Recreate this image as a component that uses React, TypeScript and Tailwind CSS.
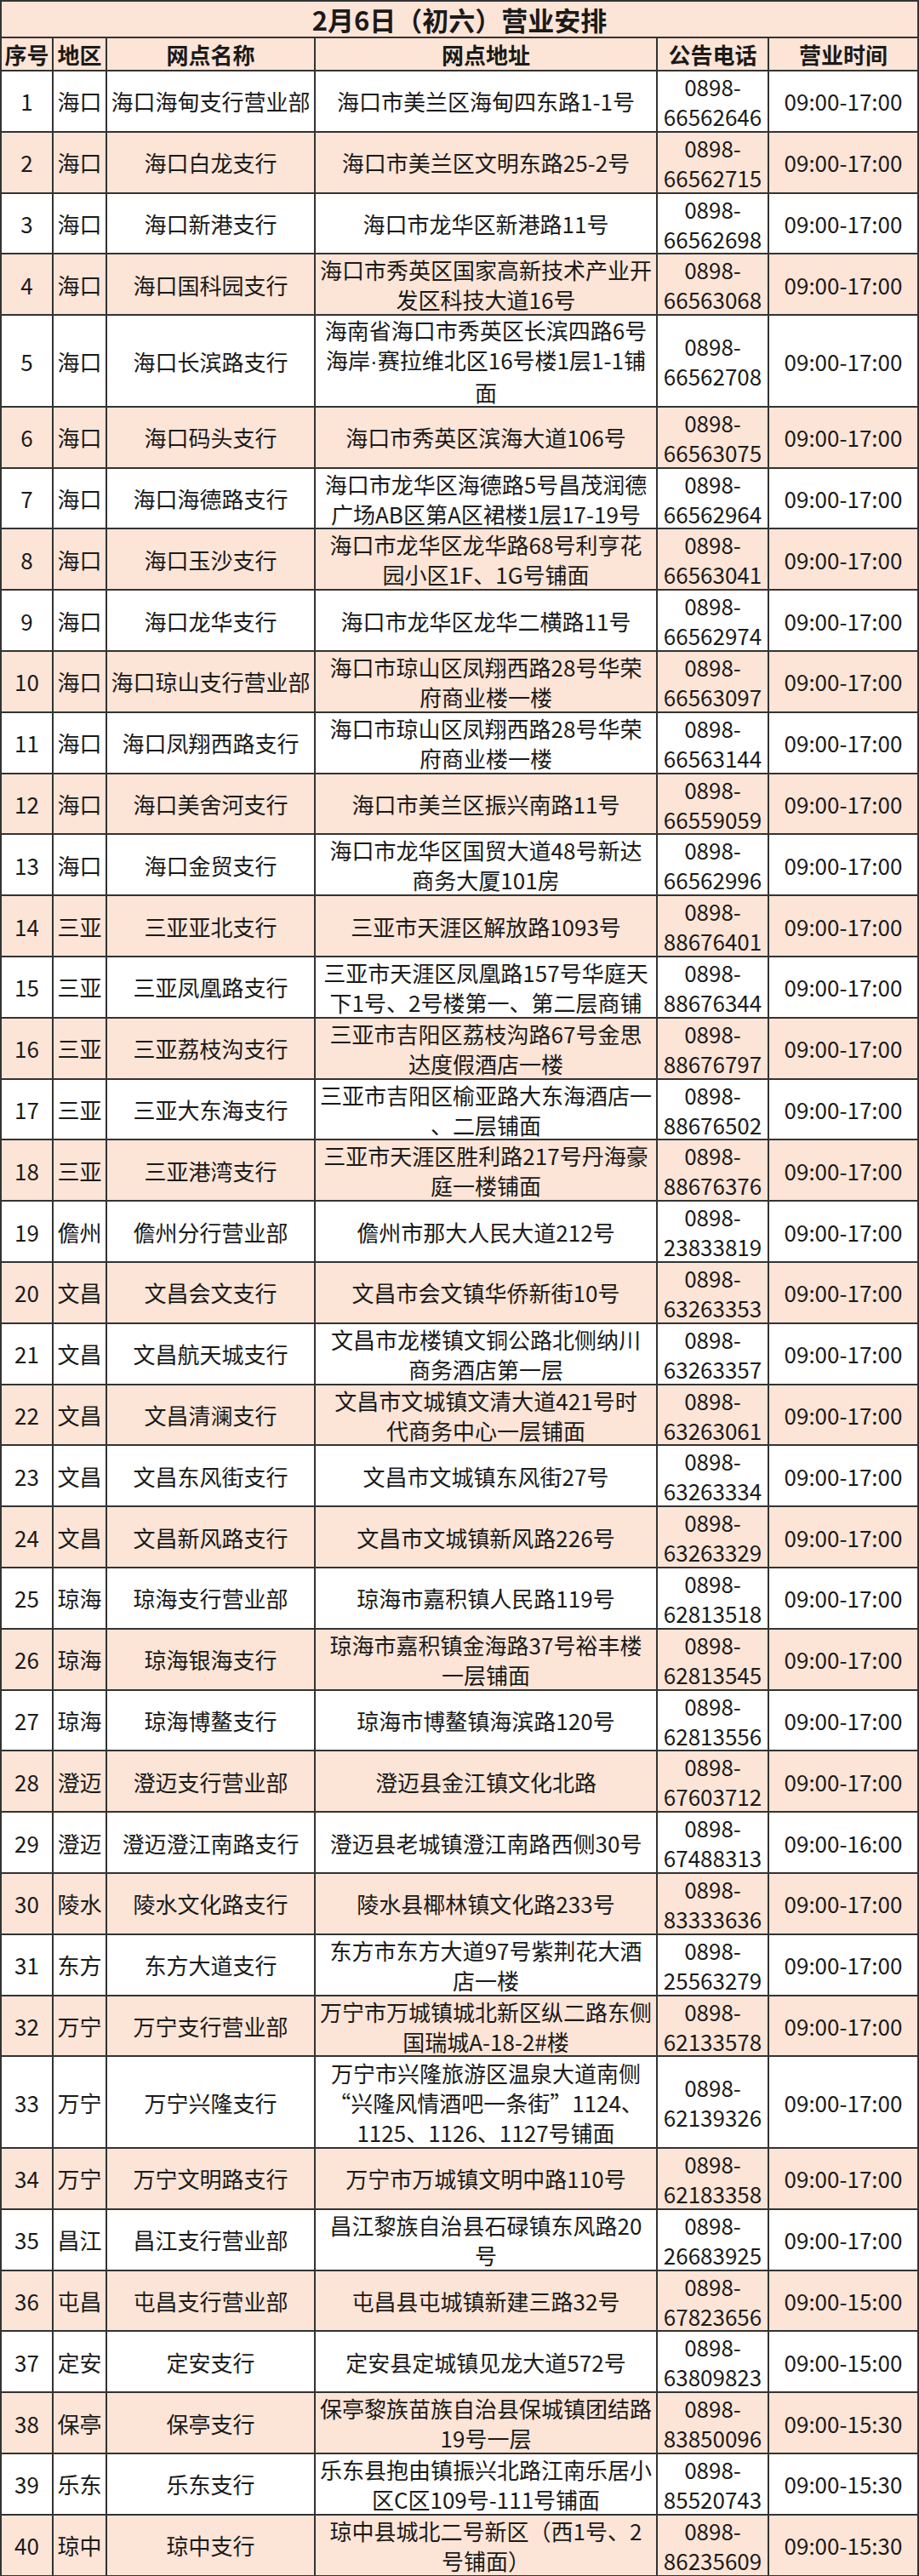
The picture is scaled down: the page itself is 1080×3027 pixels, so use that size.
import React from "react";

type Row = [string, string, string[], string, string];

const T1 = "09:00-17:00";

const rows: Row[] = [
  ["海口", "海口海甸支行营业部", ["海口市美兰区海甸四东路1-1号"], "66562646", T1],
  ["海口", "海口白龙支行", ["海口市美兰区文明东路25-2号"], "66562715", T1],
  ["海口", "海口新港支行", ["海口市龙华区新港路11号"], "66562698", T1],
  ["海口", "海口国科园支行", ["海口市秀英区国家高新技术产业开", "发区科技大道16号"], "66563068", T1],
  ["海口", "海口长滨路支行", ["海南省海口市秀英区长滨四路6号", "海岸|·|赛拉维北区16号楼1层1-1铺", "面"], "66562708", T1],
  ["海口", "海口码头支行", ["海口市秀英区滨海大道106号"], "66563075", T1],
  ["海口", "海口海德路支行", ["海口市龙华区海德路5号昌茂润德", "广场AB区第A区裙楼1层17-19号"], "66562964", T1],
  ["海口", "海口玉沙支行", ["海口市龙华区龙华路68号利亨花", "园小区1F、1G号铺面"], "66563041", T1],
  ["海口", "海口龙华支行", ["海口市龙华区龙华二横路11号"], "66562974", T1],
  ["海口", "海口琼山支行营业部", ["海口市琼山区凤翔西路28号华荣", "府商业楼一楼"], "66563097", T1],
  ["海口", "海口凤翔西路支行", ["海口市琼山区凤翔西路28号华荣", "府商业楼一楼"], "66563144", T1],
  ["海口", "海口美舍河支行", ["海口市美兰区振兴南路11号"], "66559059", T1],
  ["海口", "海口金贸支行", ["海口市龙华区国贸大道48号新达", "商务大厦101房"], "66562996", T1],
  ["三亚", "三亚亚北支行", ["三亚市天涯区解放路1093号"], "88676401", T1],
  ["三亚", "三亚凤凰路支行", ["三亚市天涯区凤凰路157号华庭天", "下1号、2号楼第一、第二层商铺"], "88676344", T1],
  ["三亚", "三亚荔枝沟支行", ["三亚市吉阳区荔枝沟路67号金思", "达度假酒店一楼"], "88676797", T1],
  ["三亚", "三亚大东海支行", ["三亚市吉阳区榆亚路大东海酒店一", "、二层铺面"], "88676502", T1],
  ["三亚", "三亚港湾支行", ["三亚市天涯区胜利路217号丹海豪", "庭一楼铺面"], "88676376", T1],
  ["儋州", "儋州分行营业部", ["儋州市那大人民大道212号"], "23833819", T1],
  ["文昌", "文昌会文支行", ["文昌市会文镇华侨新街10号"], "63263353", T1],
  ["文昌", "文昌航天城支行", ["文昌市龙楼镇文铜公路北侧纳川", "商务酒店第一层"], "63263357", T1],
  ["文昌", "文昌清澜支行", ["文昌市文城镇文清大道421号时", "代商务中心一层铺面"], "63263061", T1],
  ["文昌", "文昌东风街支行", ["文昌市文城镇东风街27号"], "63263334", T1],
  ["文昌", "文昌新风路支行", ["文昌市文城镇新风路226号"], "63263329", T1],
  ["琼海", "琼海支行营业部", ["琼海市嘉积镇人民路119号"], "62813518", T1],
  ["琼海", "琼海银海支行", ["琼海市嘉积镇金海路37号裕丰楼", "一层铺面"], "62813545", T1],
  ["琼海", "琼海博鳌支行", ["琼海市博鳌镇海滨路120号"], "62813556", T1],
  ["澄迈", "澄迈支行营业部", ["澄迈县金江镇文化北路"], "67603712", T1],
  ["澄迈", "澄迈澄江南路支行", ["澄迈县老城镇澄江南路西侧30号"], "67488313", "09:00-16:00"],
  ["陵水", "陵水文化路支行", ["陵水县椰林镇文化路233号"], "83333636", T1],
  ["东方", "东方大道支行", ["东方市东方大道97号紫荆花大酒", "店一楼"], "25563279", T1],
  ["万宁", "万宁支行营业部", ["万宁市万城镇城北新区纵二路东侧", "国瑞城A-18-2#楼"], "62133578", T1],
  ["万宁", "万宁兴隆支行", ["万宁市兴隆旅游区温泉大道南侧", "“兴隆风情酒吧一条街”1124、", "1125、1126、1127号铺面"], "62139326", T1],
  ["万宁", "万宁文明路支行", ["万宁市万城镇文明中路110号"], "62183358", T1],
  ["昌江", "昌江支行营业部", ["昌江黎族自治县石碌镇东风路20", "号"], "26683925", T1],
  ["屯昌", "屯昌支行营业部", ["屯昌县屯城镇新建三路32号"], "67823656", "09:00-15:00"],
  ["定安", "定安支行", ["定安县定城镇见龙大道572号"], "63809823", "09:00-15:00"],
  ["保亭", "保亭支行", ["保亭黎族苗族自治县保城镇团结路", "19号一层"], "83850096", "09:00-15:30"],
  ["乐东", "乐东支行", ["乐东县抱由镇振兴北路江南乐居小", "区C区109号-111号铺面"], "85520743", "09:00-15:30"],
  ["琼中", "琼中支行", ["琼中县城北二号新区（西1号、2", "号铺面）"], "86235609", "09:00-15:30"],
];

const cellBase =
  "flex shrink-0 flex-col items-center justify-center border-r-2 border-[#333333] text-center leading-[35px] whitespace-nowrap";

function Line({ text }: { text: string }) {
  if (!text.includes("|")) return <span>{text}</span>;
  const parts = text.split("|");
  return (
    <span>
      {parts[0]}
      <span className="font-['Liberation_Sans',sans-serif]">{parts[1]}</span>
      {parts[2]}
    </span>
  );
}

export default function App() {
  return (
    <div className="w-[1080px] bg-white font-['Noto_Sans_CJK_SC','Noto_Sans',sans-serif] text-[#1a1a1a]">
      <div className="w-[1080px] border-l-2 border-t-2 border-[#333333]">
        {/* Title */}
        <div className="flex h-[43px] border-b-2 border-[#333333] bg-[#fce4d6]">
          <div className="flex w-[1078px] items-center justify-center border-r-2 border-[#333333] text-[31px] font-bold leading-none">
            2月6日（初六）营业安排
          </div>
        </div>
        {/* Header */}
        <div className="flex h-[39px] border-b-2 border-[#333333] bg-[#fce4d6] text-[26px] font-bold">
          <div className={`${cellBase} w-[61px]`}>序号</div>
          <div className={`${cellBase} w-[63px]`}>地区</div>
          <div className={`${cellBase} w-[245px]`}>网点名称</div>
          <div className={`${cellBase} w-[402px]`}>网点地址</div>
          <div className={`${cellBase} w-[131px]`}>公告电话</div>
          <div className={`${cellBase} w-[176px]`}>营业时间</div>
        </div>
        {/* Body */}
        {rows.map((r, i) => {
          const [region, name, addr, phone, time] = r;
          const tall = addr.length > 2;
          const bg = i % 2 === 1 ? "bg-[#fce4d6]" : "bg-white";
          const h = tall ? "h-[107.7px]" : "h-[71.8px]";
          return (
            <div key={i} className={`flex ${h} ${bg} border-b-2 border-[#333333] text-[26px]`}>
              <div className={`${cellBase} w-[61px]`}>{i + 1}</div>
              <div className={`${cellBase} w-[63px]`}>{region}</div>
              <div className={`${cellBase} w-[245px]`}>{name}</div>
              <div className={`${cellBase} w-[402px]`}>
                {addr.map((l, j) => (
                  <Line key={j} text={l} />
                ))}
              </div>
              <div className={`${cellBase} w-[131px]`}>
                <span>0898-</span>
                <span>{phone}</span>
              </div>
              <div className={`${cellBase} w-[176px]`}>{time}</div>
            </div>
          );
        })}
      </div>
    </div>
  );
}
